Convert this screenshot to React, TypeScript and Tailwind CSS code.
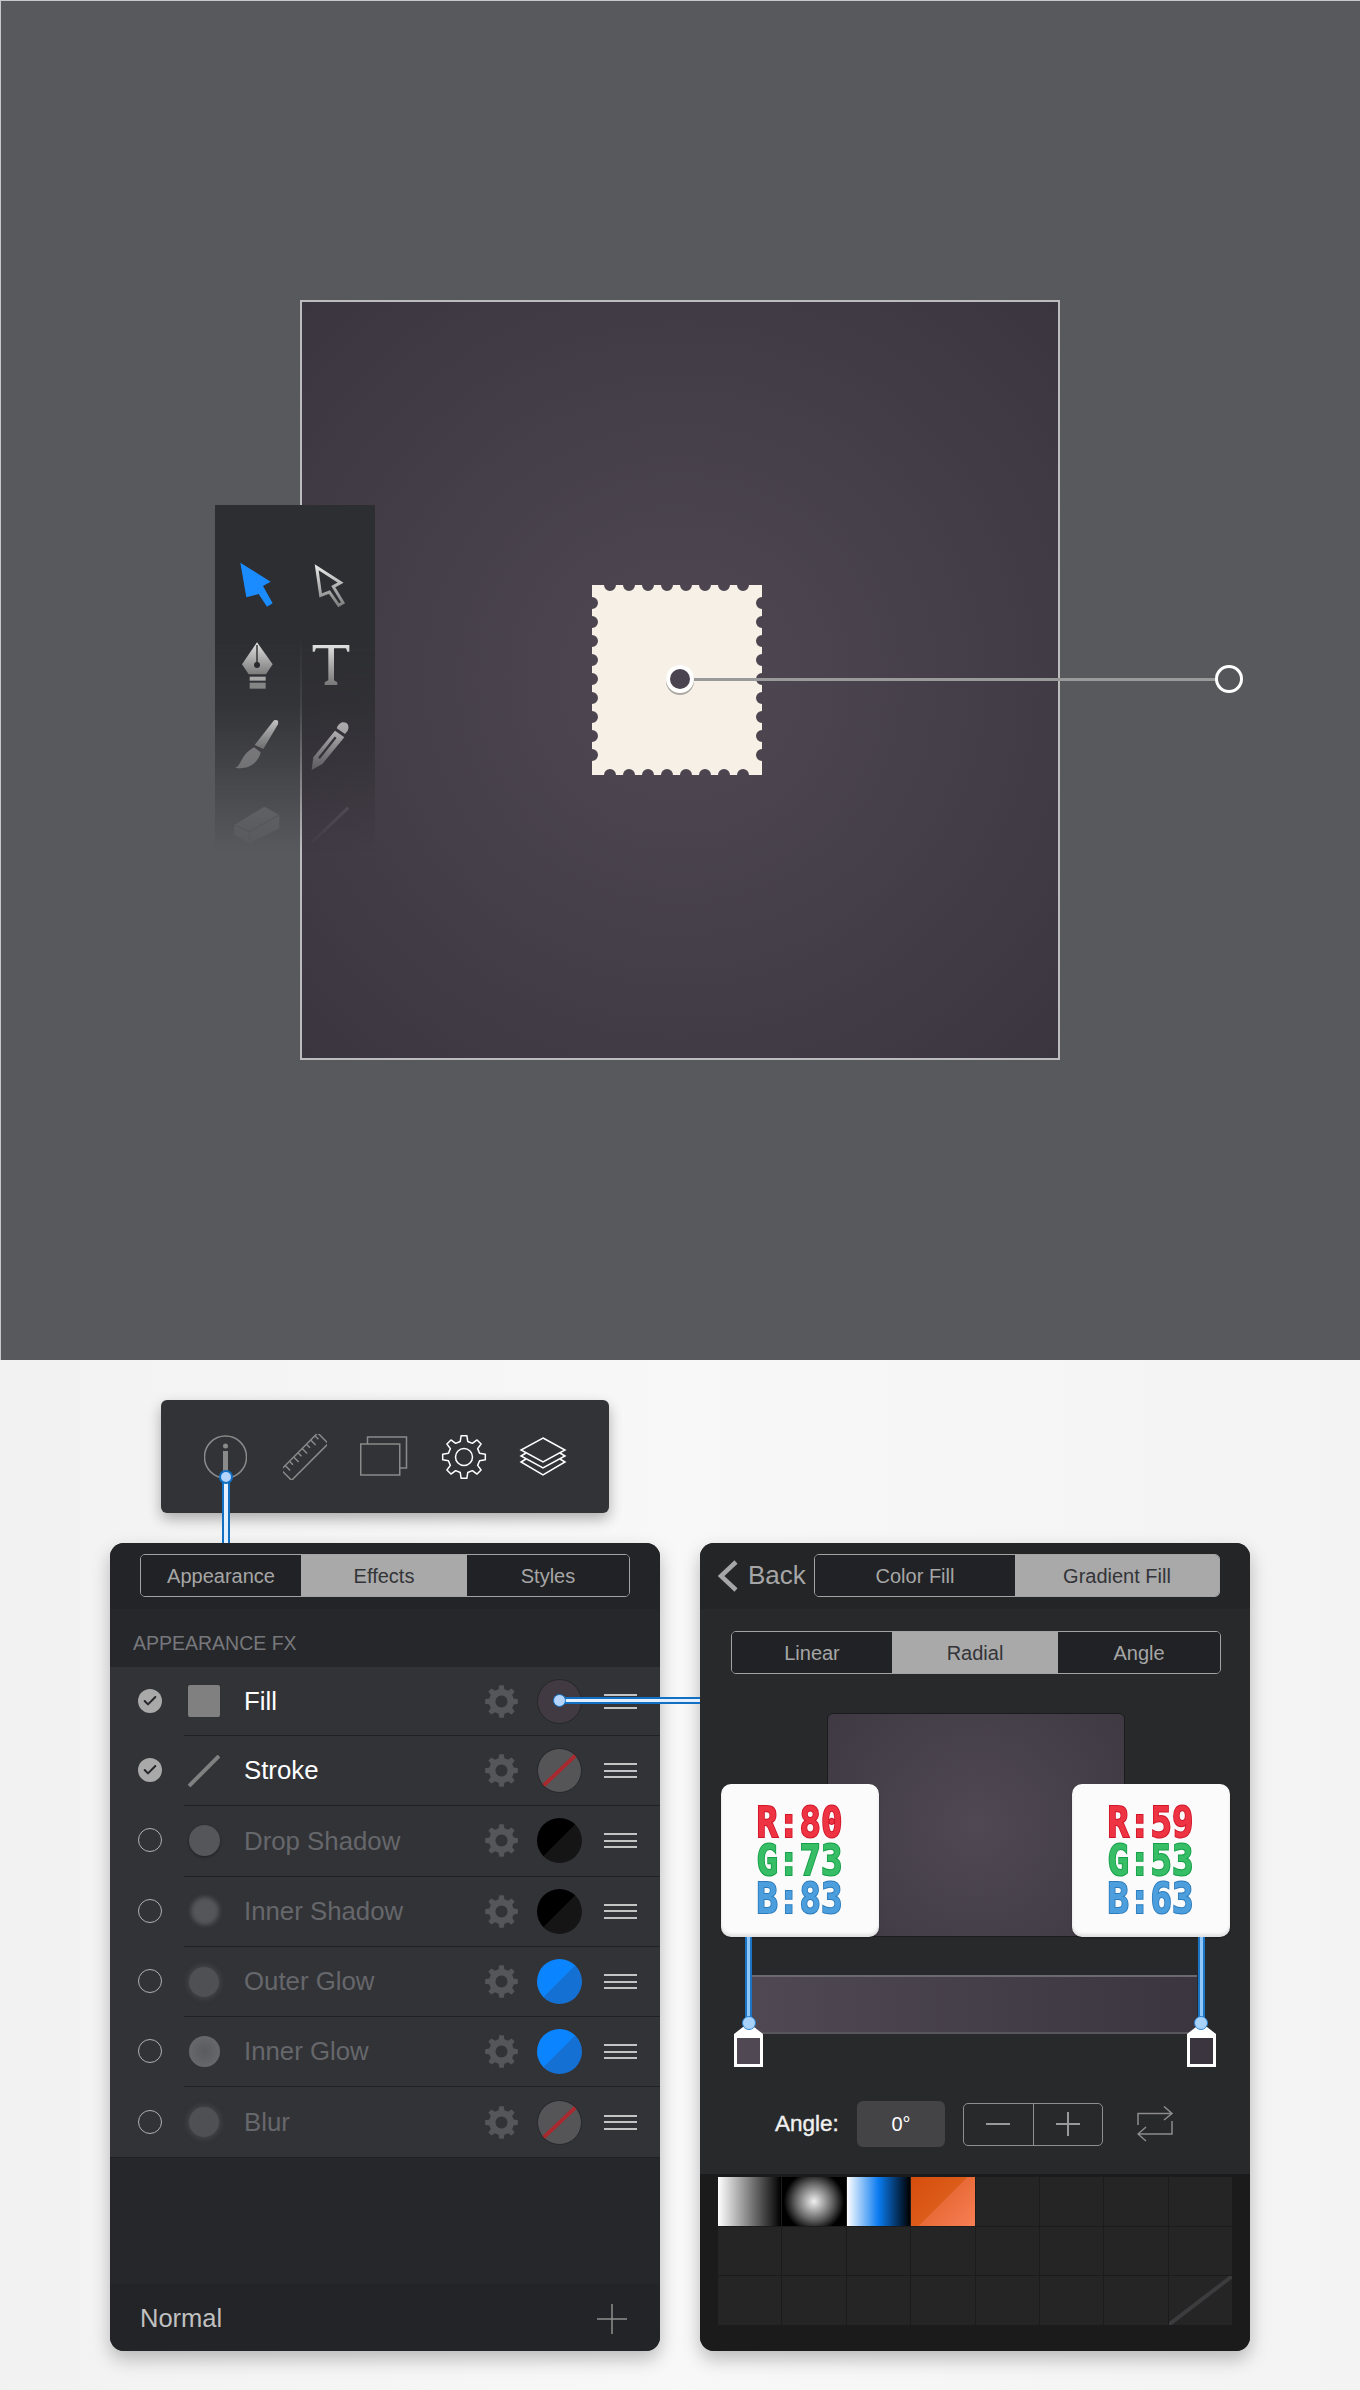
import { Check } from 'lucide-react';

// Builds a gear outline as an svg path
const gearPath = (cx: number, cy: number, teeth: number, ro: number, ri: number) => {
  const step = (Math.PI * 2) / teeth;
  const pt = (r: number, a: number) => `${(cx + r * Math.cos(a)).toFixed(2)} ${(cy + r * Math.sin(a)).toFixed(2)}`;
  let d = '';
  for (let i = 0; i < teeth; i++) {
    const a = i * step - Math.PI / 2;
    d += `${i === 0 ? 'M' : 'L'}${pt(ri, a - 0.3 * step)} L${pt(ro, a - 0.17 * step)} L${pt(ro, a + 0.17 * step)} L${pt(ri, a + 0.3 * step)} `;
  }
  return d + 'Z';
};

// Stamp outline: rectangle with round bites along each edge
const stampPath = () => {
  const w = 170;
  const h = 190;
  const r = 6;
  let d = 'M0 0 ';
  for (let i = 0; i < 8; i++) d += `L${18 + i * 19 - r} 0 A${r} ${r} 0 0 0 ${18 + i * 19 + r} 0 `;
  d += `L${w} 0 `;
  for (let i = 0; i < 9; i++) d += `L${w} ${18 + i * 19 - r} A${r} ${r} 0 0 0 ${w} ${18 + i * 19 + r} `;
  d += `L${w} ${h} `;
  for (let i = 7; i >= 0; i--) d += `L${18 + i * 19 + r} ${h} A${r} ${r} 0 0 0 ${18 + i * 19 - r} ${h} `;
  d += `L0 ${h} `;
  for (let i = 8; i >= 0; i--) d += `L0 ${18 + i * 19 + r} A${r} ${r} 0 0 0 0 ${18 + i * 19 - r} `;
  return d + 'Z';
};

const ToolIcon = ({ cx, cy, children }: { cx: number; cy: number; children: React.ReactNode }) => (
  <svg width="50" height="50" viewBox={`${cx - 75} ${cy - 75} 150 150`} className="overflow-visible">
    {children}
  </svg>
);

const ToolDefs = () => (
  <svg width="0" height="0" className="absolute">
    <defs>
      <linearGradient id="metal" x1="0" y1="0" x2="0" y2="1">
        <stop offset="0" stopColor="#e4e4e4" />
        <stop offset="1" stopColor="#7f7f7f" />
      </linearGradient>
    </defs>
  </svg>
);

const ToolPanel = () => (
  <div className="absolute left-[215px] top-[505px] w-[160px] h-[345px] bg-[#2d2e32] shadow-[3px_0_10px_rgba(0,0,0,0.3)] [mask-image:linear-gradient(to_bottom,black_38%,rgba(0,0,0,0.85)_58%,rgba(0,0,0,0.4)_80%,transparent_100%)]">
    <ToolDefs />
    <div className="grid grid-cols-[73px_73px] auto-rows-[80px] pt-[40px] pl-[5px] justify-items-center items-center">
      <ToolIcon cx={200} cy={315}>
        <path d="M150 248 L241 305 L218 318 L247 370 L230 380 L205 342 L168 352 Z" fill="#1a8cff" />
      </ToolIcon>
      <ToolIcon cx={420} cy={315}>
        <path d="M380 262 L452 308 L430 320 L459 368 L446 376 L418 336 L392 346 Z" fill="none" stroke="url(#metal)" strokeWidth="9" />
      </ToolIcon>
      <ToolIcon cx={205} cy={550}>
        <path d="M205 482 L252 548 L232 578 L180 578 L160 548 Z" fill="url(#metal)" />
        <path d="M205 490 V545" stroke="#222" strokeWidth="4" />
        <circle cx="205" cy="550" r="9" fill="#26272a" />
        <rect x="183" y="585" width="48" height="12" fill="#b0b0b0" />
        <rect x="183" y="603" width="48" height="18" fill="#8a8a8a" />
      </ToolIcon>
      <ToolIcon cx={420} cy={560}>
        <path d="M368 500 H478 V520 H472 L468 510 H432 V606 L442 612 V620 H404 V612 L415 606 V510 H378 L374 520 H368 Z" fill="url(#metal)" />
      </ToolIcon>
      <ToolIcon cx={205} cy={790}>
        <path d="M256 716 Q272 712 268 728 L224 802 L198 790 Z" fill="url(#metal)" />
        <path d="M196 797 L216 812 C210 842 180 866 140 858 C160 850 155 820 196 797 Z" fill="#8f8f8f" />
      </ToolIcon>
      <ToolIcon cx={425} cy={795}>
        <path d="M370 870 L375 832 L440 752 L468 772 L402 852 Z" fill="url(#metal)" />
        <path d="M392 835 L442 772" stroke="#2d2e32" strokeWidth="7" />
        <path d="M445 745 C455 715 490 725 478 752 L470 762 Z" fill="#d0d0d0" />
      </ToolIcon>
      <ToolIcon cx={203} cy={1040}>
        <path d="M135 1040 L225 985 L270 1010 L270 1050 L180 1095 L135 1070 Z" fill="#77787c" />
        <path d="M135 1040 L180 1060 L270 1010 M180 1060 V1095" stroke="#48494d" strokeWidth="4" fill="none" />
      </ToolIcon>
      <ToolIcon cx={425} cy={1032}>
        <path d="M370 1085 L480 980" stroke="#77787c" strokeWidth="9" />
      </ToolIcon>
    </div>
  </div>
);

const Canvas = () => (
  <section className="relative h-[1360px] flex items-center justify-center bg-[#58595d] shadow-[inset_1px_1px_0_#c8c8c8]">
    <div className="relative w-[760px] h-[760px] border-2 border-[#bdbcbd] bg-[radial-gradient(circle_at_center,#504953,#3b353f)] flex items-center justify-center">
      <svg width="170" height="190" viewBox="0 0 170 190" className="-translate-x-[3px]">
        <path d={stampPath()} fill="#f7f0e6" />
      </svg>
      <div className="absolute left-[390px] top-[376px] w-[526px] h-[3px] bg-[#9a9a9a]" />
      <div className="absolute left-[364px] top-[363px] w-[28px] h-[28px] rounded-full bg-[#4a4350] border-[4px] border-white shadow-[0_2px_0_rgba(0,0,0,0.3)]" />
      <div className="absolute left-[913px] top-[363px] w-[28px] h-[28px] rounded-full bg-[#55565a] border-[3px] border-white" />
    </div>
    <ToolPanel />
  </section>
);

const Segmented = ({ items, widths, active, className }: { items: string[]; widths: string; active: number; className: string }) => (
  <div className={`grid ${widths} h-[43px] rounded-[5px] border-[1.5px] border-[#a3a3a3] overflow-hidden text-[20px] ${className}`}>
    {items.map((item, i) => (
      <div
        key={item}
        className={`flex items-center justify-center ${i === active ? 'bg-[#a9a9a9] text-[#333438]' : 'bg-[#212225] text-[#a6a6a6]'}`}
      >
        {item}
      </div>
    ))}
  </div>
);

const MainToolbar = () => (
  <div className="ml-[161px] w-[448px] h-[113px] rounded-[6px] bg-[#323337] shadow-[0_6px_14px_rgba(0,0,0,0.3)] flex items-center pl-[43px]">
    <svg width="43" height="44" viewBox="0 0 43 44">
      <circle cx="21.5" cy="22" r="21" fill="none" stroke="#8a8a8a" strokeWidth="1.5" />
      <circle cx="21.5" cy="11" r="2.5" fill="#8a8a8a" />
      <rect x="19" y="16" width="5" height="22" fill="#8a8a8a" />
    </svg>
    <svg width="44" height="46" viewBox="0 0 44 46" fill="none" stroke="#8a8a8a" strokeWidth="1.5" className="ml-[36px]">
      <g transform="rotate(-45 22 23)">
        <rect x="-4" y="15" width="52" height="15" />
        <path d="M2 15 v7 M8 15 v5 M14 15 v7 M20 15 v5 M26 15 v7 M32 15 v5 M38 15 v7 M44 15 v5" />
      </g>
    </svg>
    <svg width="48" height="42" viewBox="0 0 48 42" fill="none" stroke="#8a8a8a" strokeWidth="1.5" className="ml-[33px]">
      <rect x="0.75" y="8" width="39" height="31" />
      <path d="M7.5 8 V1 H46.5 V32 H39.75" />
    </svg>
    <svg width="44" height="44" viewBox="0 0 44 44" className="overflow-visible ml-[34px]">
      <path d={gearPath(22, 22, 8, 21.5, 16)} fill="none" stroke="#fff" strokeWidth="1.5" strokeLinejoin="round" />
      <circle cx="22" cy="22" r="8.5" fill="none" stroke="#fff" strokeWidth="1.5" />
    </svg>
    <svg width="48" height="40" viewBox="0 0 48 40" fill="none" stroke="#fff" strokeWidth="1.5" className="ml-[33px]">
      <path d="M24 1 L46 13 L24 25 L2 13 Z" />
      <path d="M7 16 L2 19 L24 31 L46 19 L41 16" />
      <path d="M7 22 L2 25 L24 38 L46 25 L41 22" />
    </svg>
  </div>
);

type Effect = {
  name: string;
  on?: boolean;
  icon: string;
  swatch: string;
};

const effects: Effect[] = [
  { name: 'Fill', on: true, icon: 'fill', swatch: 'fill' },
  { name: 'Stroke', on: true, icon: 'stroke', swatch: 'none' },
  { name: 'Drop Shadow', icon: 'drop', swatch: 'black' },
  { name: 'Inner Shadow', icon: 'inner', swatch: 'black' },
  { name: 'Outer Glow', icon: 'outer', swatch: 'blue' },
  { name: 'Inner Glow', icon: 'innerGlow', swatch: 'blue' },
  { name: 'Blur', icon: 'outer', swatch: 'none' },
];

const EffectIcon = ({ kind }: { kind: string }) => {
  if (kind === 'fill') return <div className="w-[32px] h-[32px] rounded-[2px] bg-[#808080]" />;
  if (kind === 'stroke')
    return (
      <svg width="32" height="32" viewBox="0 0 32 32">
        <path d="M1 31 L31 1" stroke="#808080" strokeWidth="4" />
      </svg>
    );
  if (kind === 'drop') return <div className="w-[31px] h-[31px] rounded-full bg-[#55565a] shadow-[0_1px_3px_rgba(0,0,0,0.4)]" />;
  if (kind === 'inner') return <div className="w-[28px] h-[28px] ml-[2px] rounded-full bg-[#55565a] blur-[2px]" />;
  if (kind === 'innerGlow') return <div className="w-[31px] h-[31px] rounded-full bg-[radial-gradient(circle,#5a5b5f,#6c6d70)]" />;
  return <div className="w-[30px] h-[30px] rounded-full bg-[#4f5054] shadow-[0_0_5px_2px_rgba(85,86,90,0.5)]" />;
};

const Swatch = ({ kind }: { kind: string }) => {
  if (kind === 'none')
    return (
      <div className="w-[45px] h-[45px] rounded-full border border-[#26272a] bg-[#555558] flex items-center justify-center">
        <svg width="45" height="45" viewBox="0 0 45 45">
          <path d="M6 38 L39 7" stroke="#a92a2e" strokeWidth="4" />
        </svg>
      </div>
    );
  if (kind === 'black') return <div className="w-[45px] h-[45px] rounded-full bg-[linear-gradient(135deg,#000_50%,#151515_50%)]" />;
  if (kind === 'blue') return <div className="w-[45px] h-[45px] rounded-full bg-[linear-gradient(135deg,#0a84ff_50%,#1570d4_50%)]" />;
  return <div className="w-[45px] h-[45px] rounded-full bg-[#413a42] border border-[#26272a]" />;
};

const EffectRow = ({ effect, first }: { effect: Effect; first: boolean }) => (
  <div className={`flex bg-[#323337] ${first ? 'h-[68px]' : 'h-[70.3px]'}`}>
    <div className="w-[74px] shrink-0 flex items-center justify-end pr-[22px]">
      {effect.on ? (
        <div className="w-[24px] h-[24px] rounded-full bg-[#a9a9a9] flex items-center justify-center">
          <Check size={16} strokeWidth={3} className="text-[#26272a]" />
        </div>
      ) : (
        <div className="w-[24px] h-[24px] rounded-full border-[1.5px] border-[#b0b0b0]" />
      )}
    </div>
    <div className={`flex-1 flex items-center pl-[4px] pr-[23px] ${first ? '' : 'border-t border-[#202125]'}`}>
      <div className="w-[32px] flex items-center justify-center">
        <EffectIcon kind={effect.icon} />
      </div>
      <span className={`ml-[24px] flex-1 text-[25.8px] ${effect.on ? 'text-white' : 'text-[#66676b]'}`}>{effect.name}</span>
      <svg width="33" height="33" viewBox="0 0 33 33">
        <path d={`${gearPath(16.5, 16.5, 8, 16.5, 12.5)} M16.5 10.5 a6 6 0 1 0 0.01 0 Z`} fill="#55565a" fillRule="evenodd" />
      </svg>
      <div className="ml-[19px]">
        <Swatch kind={effect.swatch} />
      </div>
      <div className="ml-[22px] w-[33px] flex flex-col gap-[4.5px]">
        <div className="h-[2px] bg-[#c4c4c4]" />
        <div className="h-[2px] bg-[#c4c4c4]" />
        <div className="h-[2px] bg-[#c4c4c4]" />
      </div>
    </div>
  </div>
);

const EffectsPanel = () => (
  <div className="w-[550px] h-[808px] rounded-[14px] bg-[#26272a] shadow-[0_8px_18px_rgba(0,0,0,0.25)] overflow-hidden flex flex-col">
    <div className="h-[66px] bg-[#232427] px-[30px] pt-[11px]">
      <Segmented items={['Appearance', 'Effects', 'Styles']} widths="grid-cols-[160px_166px_1fr]" active={1} className="w-[490px]" />
    </div>
    <div className="h-[58px] flex items-center pl-[23px] pt-[12px] text-[19.5px] text-[#77787c]">APPEARANCE FX</div>
    <div className="border-b border-[#202125]">
      {effects.map((effect, i) => (
        <EffectRow key={effect.name} effect={effect} first={i === 0} />
      ))}
    </div>
    <div className="flex-1" />
    <div className="h-[67px] bg-[#232427] flex items-center justify-between pl-[30px] pr-[32px] pt-[2px] text-[25.5px] text-[#c0c0c0]">
      Normal
      <svg width="32" height="32" viewBox="0 0 32 32">
        <path d="M16 1 V31 M1 16 H31" stroke="#8e8e8e" strokeWidth="1.5" />
      </svg>
    </div>
  </div>
);

const ColorLabel = ({ r, g, b, className }: { r: number; g: number; b: number; className: string }) => (
  <div className={`absolute top-[241px] w-[158px] h-[153px] rounded-[10px] bg-[#fbfbfb] shadow-[inset_0_-3px_3px_rgba(0,0,0,0.1),0_1px_2px_rgba(0,0,0,0.3)] flex flex-col items-center justify-center font-['DejaVu_Sans_Mono',monospace] font-bold text-[42px] leading-[38px] z-10 ${className}`}>
    <span className="scale-x-[0.85] text-[#ee3442] [-webkit-text-stroke:2px_#d1162a] [paint-order:stroke_fill]">{`R:${r}`}</span>
    <span className="scale-x-[0.85] text-[#36bd66] [-webkit-text-stroke:2px_#14a047] [paint-order:stroke_fill]">{`G:${g}`}</span>
    <span className="scale-x-[0.85] text-[#4c9fdc] [-webkit-text-stroke:2px_#2c7cbd] [paint-order:stroke_fill]">{`B:${b}`}</span>
  </div>
);

const VLine = ({ className }: { className: string }) => (
  <div className={`absolute w-[7px] border-x-2 border-[#1c74c4] bg-[#8fc7fb] z-10 ${className}`} />
);

const StopDot = ({ className }: { className: string }) => (
  <div className={`absolute w-[14px] h-[14px] rounded-full bg-[#a9d2fb] border border-[#2a80d0] z-20 ${className}`} />
);

const GradientStop = ({ color, className }: { color: string; className: string }) => (
  <div className={`absolute top-[482px] w-[29px] h-[42px] z-10 ${className}`}>
    <svg width="29" height="42" viewBox="0 0 29 42">
      <path d="M0 9 L9 2 H20 L29 9 V42 H0 Z" fill="#fff" />
      <rect x="3" y="13" width="23" height="26" fill={color} />
    </svg>
  </div>
);

const swatches = [
  'bg-[linear-gradient(90deg,#fff,#000)]',
  'bg-[radial-gradient(circle,#f0f0f0,#666_45%,#000_75%)]',
  'bg-[linear-gradient(90deg,#fff,#0a7bf0_50%,#000)]',
  'bg-[linear-gradient(135deg,#d64d0c,#dc5c1a_50%,#e96a38_50%,#f88055)]',
];

const GradientPanel = () => (
  <div className="relative w-[550px] h-[808px] rounded-[14px] bg-[#28292b] shadow-[0_8px_18px_rgba(0,0,0,0.25)] overflow-hidden flex flex-col">
    <div className="h-[66px] shrink-0 bg-[#242527] flex items-start pt-[11px] pl-[18px]">
      <svg width="20" height="32" viewBox="0 0 20 32" fill="none" stroke="#a6a6a6" strokeWidth="4.5" className="mt-[6px]">
        <path d="M18 2 L3 16 L18 30" />
      </svg>
      <span className="text-[26px] text-[#a6a6a6] leading-[43px] ml-[10px] w-[66px]">Back</span>
      <Segmented items={['Color Fill', 'Gradient Fill']} widths="grid-cols-[200px_1fr]" active={1} className="w-[406px]" />
    </div>
    <div className="pt-[22px] pl-[31px]">
      <Segmented items={['Linear', 'Radial', 'Angle']} widths="grid-cols-[160px_166px_1fr]" active={1} className="w-[490px]" />
    </div>
    <div className="mt-[39px] ml-[127px] w-[298px] h-[224px] shrink-0 rounded-[6px] border border-[#1c1c1e] bg-[radial-gradient(circle_at_center,#504953,#3f3943)]" />
    <div className="mt-[38px] ml-[52px] w-[445px] h-[59px] shrink-0 border-y-2 border-t-[#6c6a70] border-b-[#5a565e] bg-[linear-gradient(90deg,#504953,#3b353f)]" />
    <div className="mt-[67px] h-[46px] shrink-0 flex items-center pl-[75px]">
      <span className="w-[82px] text-[22.5px] text-[#f0f0f0] [-webkit-text-stroke:0.4px_#f0f0f0]">Angle:</span>
      <div className="w-[88px] h-[46px] rounded-[6px] bg-[#444446] flex items-center justify-center text-[20px] text-white">0°</div>
      <div className="ml-[18px] w-[140px] h-[43px] rounded-[5px] border-[1.5px] border-[#8e8e8e] flex">
        <div className="flex-1 flex items-center justify-center border-r-[1.5px] border-[#8e8e8e]">
          <div className="w-[24px] h-[2px] bg-[#9a9a9a]" />
        </div>
        <div className="flex-1 flex items-center justify-center">
          <svg width="24" height="24" viewBox="0 0 24 24">
            <path d="M12 0 V24 M0 12 H24" stroke="#9a9a9a" strokeWidth="2" />
          </svg>
        </div>
      </div>
      <svg width="37" height="36" viewBox="0 0 37 36" fill="none" stroke="#8c8c8c" strokeWidth="1.5" className="ml-[34px]">
        <path d="M1 19 V7.5 H35 M27 0.5 L35 7.5 L27 14" />
        <path d="M35 15 V28 H1 M9 21 L1 28 L9 35" />
      </svg>
    </div>
    <div className="mt-[27px] flex-1 bg-[#1b1b1c] pt-[3px] pl-[18px] pr-[18px]">
      <div className="grid grid-cols-8 auto-rows-[48.6px] gap-px">
        {Array.from({ length: 24 }).map((_, i) => (
          <div key={i} className={`relative ${swatches[i] ?? 'bg-[#252525]'}`}>
            {i === 23 && (
              <svg className="absolute inset-0 w-full h-full" viewBox="0 0 64 49" preserveAspectRatio="none">
                <path d="M0 49 L64 0" stroke="#3c3c3e" strokeWidth="4" />
              </svg>
            )}
          </div>
        ))}
      </div>
    </div>
    <ColorLabel r={80} g={73} b={83} className="left-[21px]" />
    <ColorLabel r={59} g={53} b={63} className="left-[372px]" />
    <VLine className="left-[45px] top-[394px] h-[86px]" />
    <VLine className="left-[498px] top-[394px] h-[86px]" />
    <GradientStop color="#504953" className="left-[34px]" />
    <GradientStop color="#3b353f" className="left-[487px]" />
    <StopDot className="left-[42px] top-[473px]" />
    <StopDot className="left-[494px] top-[473px]" />
  </div>
);

export default function App() {
  return (
    <div className="w-[1360px] font-['Liberation_Sans',sans-serif]">
      <Canvas />
      <section className="relative h-[1030px] pt-[40px] bg-[linear-gradient(90deg,#f2f2f3,#f8f8f9_50%,#f3f3f4)]">
        <MainToolbar />
        <div className="flex gap-[40px] ml-[110px] mt-[30px]">
          <EffectsPanel />
          <GradientPanel />
        </div>
        {/* callout lines */}
        <div className="absolute left-[222px] top-[116px] w-[8px] h-[67px] border-x-2 border-[#1170c4] bg-[#e4f0ff]" />
        <div className="absolute left-[219px] top-[110px] w-[14px] h-[14px] rounded-full bg-[#b4d4fd] border-2 border-[#1170c4]" />
        <div className="absolute left-[560px] top-[337px] w-[140px] h-[7px] border-y-2 border-[#1170c4] bg-[#e4f0ff]" />
        <div className="absolute left-[553px] top-[334px] w-[13px] h-[13px] rounded-full bg-[#b4d4fd] border border-[#1170c4]" />
      </section>
    </div>
  );
}
